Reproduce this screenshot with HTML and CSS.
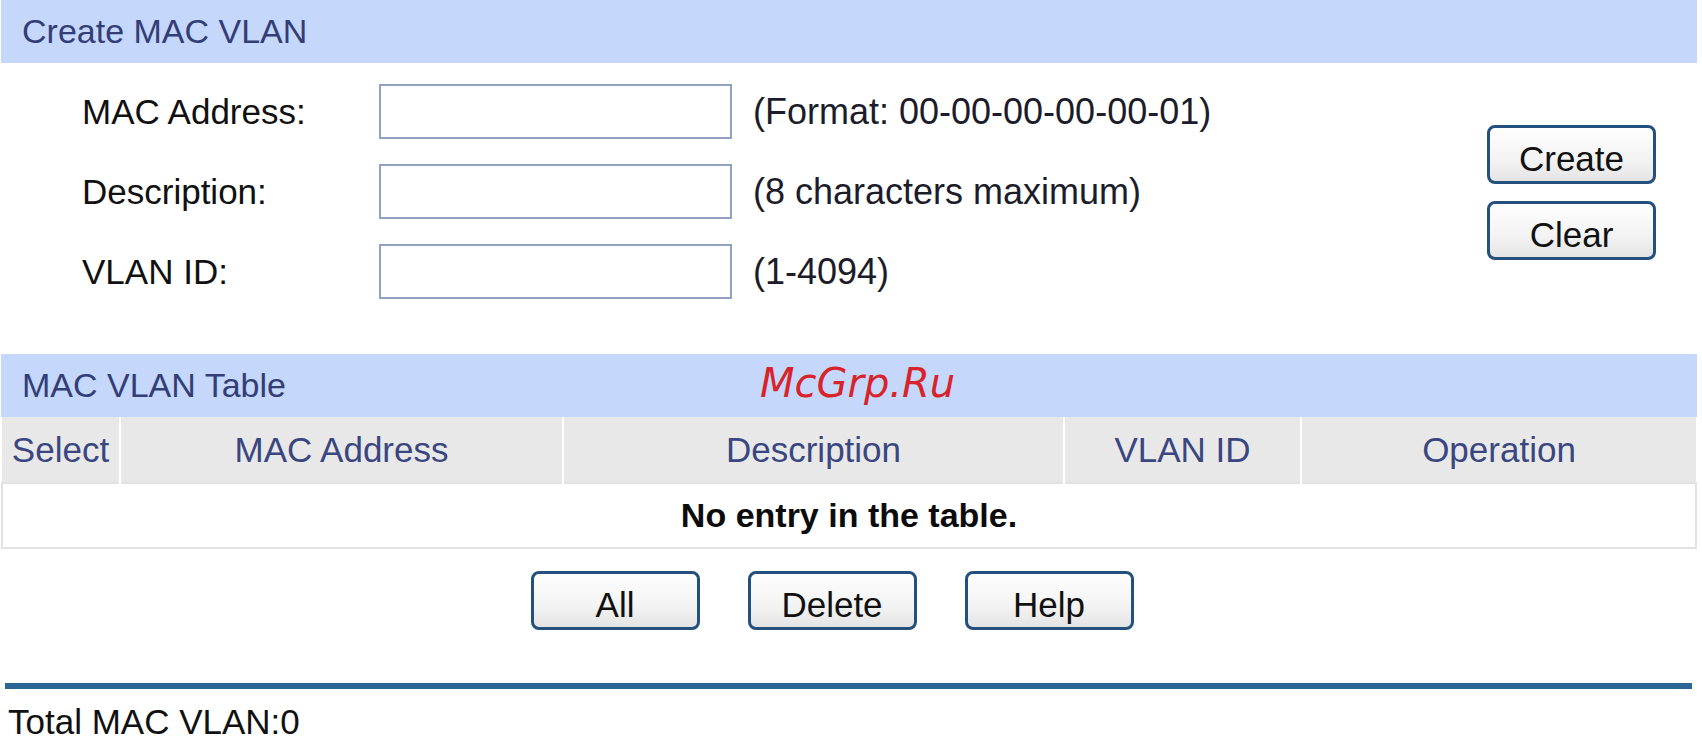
FILE: index.html
```html
<!DOCTYPE html>
<html lang="en">
<head>
    <meta charset="UTF-8">
    <meta name="viewport" content="width=device-width, initial-scale=1.0">
    <title>MAC VLAN</title>
    <link rel="stylesheet" href="styles.css">
</head>
<body>
    <div class="page">
        <div class="title">Create MAC VLAN</div>
        <div class="create">
            <div class="fields">
                <label>MAC Address:</label>
                <input type="text">
                <span class="hint">(Format: 00-00-00-00-00-01)</span>
                <label>Description:</label>
                <input type="text">
                <span class="hint">(8 characters maximum)</span>
                <label>VLAN ID:</label>
                <input type="text">
                <span class="hint">(1-4094)</span>
            </div>
            <div class="actions">
                <button class="btn">Create</button>
                <button class="btn">Clear</button>
            </div>
        </div>

        <div class="title">MAC VLAN Table</div>
        <table class="grid">
            <thead>
                <tr>
                    <th class="c-sel">Select</th>
                    <th class="c-mac">MAC Address</th>
                    <th class="c-desc">Description</th>
                    <th class="c-vid">VLAN ID</th>
                    <th class="c-op">Operation</th>
                </tr>
            </thead>
            <tbody>
                <tr>
                    <td colspan="5" class="empty">No entry in the table.</td>
                </tr>
            </tbody>
        </table>
        <div class="ops">
            <button class="btn">All</button>
            <button class="btn">Delete</button>
            <button class="btn">Help</button>
        </div>
        <div class="rule"></div>
        <div class="total">Total MAC VLAN:0</div>

        <div class="mark">McGrp.Ru</div>
    </div>
</body>
</html>
```

FILE: styles.css
```css
body{
    margin: 0;
    background: #fff;
    font-family: "Liberation Sans", Arial, sans-serif;
    color: #111;
}
.page{
    position: relative;
    width: 1696px;
    margin-left: 1px;
}
/* 蓝色标题栏 */
.title{
    height: 63px;
    line-height: 63px;
    padding-left: 21px;
    background: #c5d7fb;
    color: #333d76;
    font-size: 34px;
}
.create{
    display: flex;
    justify-content: space-between;
    height: 291px;
}
/* 三行表单：标签 / 输入框 / 提示 */
.fields{
    display: grid;
    grid-template-columns: 276px 353px auto;
    grid-auto-rows: 55px;
    row-gap: 25px;
    column-gap: 21px;
    padding: 21px 0 0 81px;
    font-size: 35px;
    align-items: center;
}
.fields label{
    line-height: 55px;
}
.fields input{
    box-sizing: border-box;
    width: 353px;
    height: 55px;
    margin: 0;
    border: 2px solid #8fa3be;
    background: #fff;
}
.hint{
    font-size: 36px;
    color: #1c1c2a;
}
.actions{
    display: flex;
    flex-direction: column;
    gap: 17px;
    padding: 62px 41px 0 0;
}
.btn{
    box-sizing: border-box;
    width: 169px;
    height: 59px;
    padding: 9px 0 0;
    border: 3px solid #24507e;
    border-radius: 8px;
    background: linear-gradient(#fefefe, #f3f3f3 60%, #e4e4e4);
    font-family: "Liberation Sans", Arial, sans-serif;
    font-size: 35px;
    color: #111;
}
.grid{
    width: 1696px;
    border-collapse: collapse;
    font-size: 35px;
}
.grid th{
    height: 65px;
    padding: 0;
    background: #e8e8e8;
    border-right: 2px solid #fff;
    color: #3a4680;
    font-weight: normal;
}
.grid th:last-child{
    border-right: 0;
}
.c-sel{ width: 117px; }
.c-mac{ width: 441px; }
.c-desc{ width: 499px; }
.c-vid{ width: 235px; }
.empty{
    height: 63px;
    padding: 0;
    border: 2px solid #e2e2e2;
    text-align: center;
    font-weight: bold;
    font-size: 34px;
    color: #0c0c0c;
}
.ops{
    display: flex;
    justify-content: center;
    gap: 48px;
    padding: 22px 34px 0 0;
}
.rule{
    height: 6px;
    margin: 53px 5px 0 4px;
    background: #2b6794;
}
.total{
    margin: 13px 0 0 7px;
    font-size: 35px;
    line-height: 40px;
}
/* 水印，盖在表格标题上 */
.mark{
    position: absolute;
    left: 759px;
    top: 363px;
    font-family: "DejaVu Sans", sans-serif;
    font-style: italic;
    font-size: 40px;
    line-height: 40px;
    color: #d8232a;
}
```
